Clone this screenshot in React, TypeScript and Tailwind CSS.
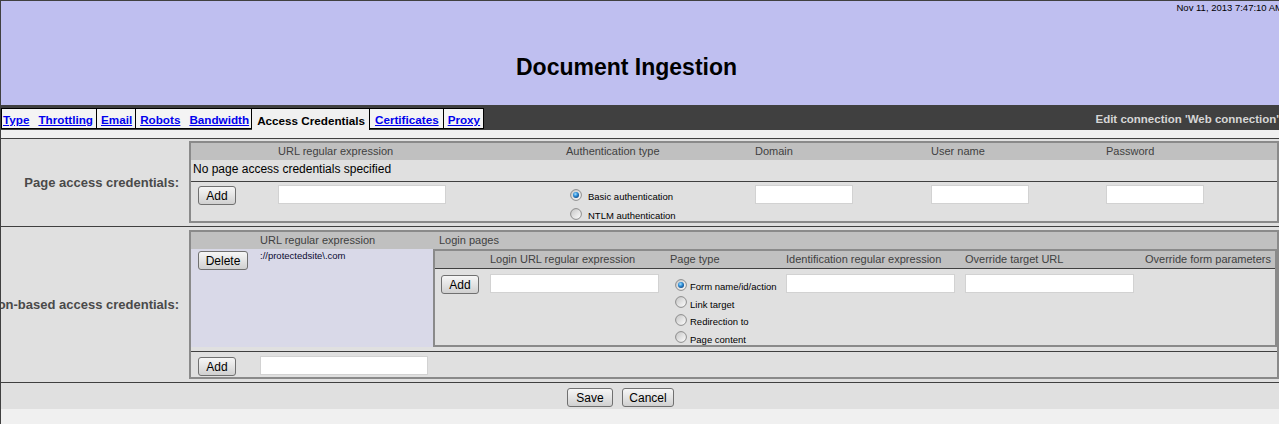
import React from "react";

function Radio({ checked }: { checked?: boolean }) {
  return (
    <svg width="12" height="12" viewBox="0 0 12 12" className="shrink-0">
      <defs>
        <linearGradient id="rgOuter" x1="0" y1="0" x2="1" y2="1">
          <stop offset="0" stopColor="#c4c4c4" />
          <stop offset="1" stopColor="#ffffff" />
        </linearGradient>
        <radialGradient id="rgDot" cx="0.4" cy="0.35" r="0.75">
          <stop offset="0" stopColor="#a8e0ff" />
          <stop offset="0.45" stopColor="#2f8fd8" />
          <stop offset="1" stopColor="#0b3d78" />
        </radialGradient>
      </defs>
      <circle cx="6" cy="6" r="5.4" fill="url(#rgOuter)" stroke="#8c8c8c" strokeWidth="1" />
      {checked && <circle cx="6" cy="6" r="3" fill="url(#rgDot)" />}
    </svg>
  );
}

function Btn({ children, className = "" }: { children: React.ReactNode; className?: string }) {
  return (
    <button
      className={`h-[19px] rounded-[3px] border border-[#707070] bg-linear-to-b from-[#f6f6f6] via-[#e4e4e4] to-[#d0d0d0] flex items-center justify-center text-[12px] leading-none text-black ${className}`}
    >
      {children}
    </button>
  );
}

function Field({ className = "" }: { className?: string }) {
  return <div className={`h-[19px] border border-[#d2d2d2] bg-white ${className}`} />;
}

function RadioRow({
  checked,
  label,
  gap,
  h,
}: {
  checked?: boolean;
  label: string;
  gap: string;
  h: string;
}) {
  return (
    <div className={`flex items-center ${gap} ${h}`}>
      <Radio checked={checked} />
      <span className="pt-[5px] text-[9.5px] leading-[12px] text-black whitespace-nowrap">{label}</span>
    </div>
  );
}

export default function App() {
  return (
    <div className="w-[1279px] h-[424px] overflow-hidden bg-[#f0f0f0] border-l border-[#404040] font-['Liberation_Sans',Arial,sans-serif]">
      {/* Header */}
      <div className="border-t border-[#404040]">
        <div className="h-[104px] bg-[#bfbff0] flex flex-col">
          <div className="flex justify-end -mr-[4px] pt-[1px] text-[9.5px] leading-[12px] text-black whitespace-nowrap">
            Nov 11, 2013 7:47:10 AM
          </div>
          <div className="w-[1251px] mt-[39px] text-center text-[23px] font-bold leading-[28px] text-black">
            Document Ingestion
          </div>
        </div>

        {/* Tab bar */}
        <div className="h-[25px] bg-[#404040] flex items-start justify-between text-[11.7px] font-bold">
          <div className="flex mt-[3px]">
            <div className="h-[21px] border border-black bg-[#f4f4f4] flex items-center pt-[2px] pl-[1px] pr-[3px] gap-[9px] leading-[19px]">
              <span className="text-[#0000ee] underline">Type</span>
              <span className="text-[#0000ee] underline">Throttling</span>
            </div>
            <div className="h-[21px] border-y border-r border-black bg-[#f4f4f4] flex items-center pt-[2px] pl-[4px] pr-[3px] leading-[19px]">
              <span className="text-[#0000ee] underline">Email</span>
            </div>
            <div className="h-[21px] border-y border-r border-black bg-[#f4f4f4] flex items-center pt-[2px] pl-[4px] pr-[2px] gap-[9px] leading-[19px]">
              <span className="text-[#0000ee] underline">Robots</span>
              <span className="text-[#0000ee] underline">Bandwidth</span>
            </div>
            <div className="h-[22px] border-t border-r border-black bg-[#f0f0f0] flex items-center pt-[2px] pl-[5px] pr-[4px] leading-[19px]">
              <span className="text-black">Access Credentials</span>
            </div>
            <div className="h-[21px] border-y border-r border-black bg-[#f4f4f4] flex items-center pt-[2px] pl-[5px] pr-[4px] leading-[19px]">
              <span className="text-[#0000ee] underline">Certificates</span>
            </div>
            <div className="h-[21px] border-y border-r border-black bg-[#f4f4f4] flex items-center pt-[2px] pl-[4px] pr-[3px] leading-[19px]">
              <span className="text-[#0000ee] underline">Proxy</span>
            </div>
          </div>
          <div className="pt-[2px] leading-[25px] text-[11.5px] text-[#d6d6d6] whitespace-nowrap">
            Edit connection 'Web connection'
          </div>
        </div>
      </div>

      {/* strip */}
      <div className="h-[8px] bg-[#f0f0f0]" />

      {/* Main */}
      <div className="border-t border-[#404040] bg-[#e0e0e0]">
        {/* Row 1: Page access credentials */}
        <div className="h-[87px] flex border-b border-[#404040] box-content">
          <div className="w-[188px] shrink-0 flex items-center justify-end pr-[10px] overflow-hidden">
            <span className="text-[13px] font-bold text-[#4a4a4a] whitespace-nowrap">Page access credentials:</span>
          </div>
          <div className="flex-1 mt-[2px] h-[82px] border-2 border-[#8a8a8a] flex flex-col">
            <div className="h-[17px] bg-[#c0c0c0] grid grid-cols-[87px_288px_189px_176px_175px_1fr] text-[11px] leading-[17px] text-[#404040]">
              <div />
              <div>URL regular expression</div>
              <div>Authentication type</div>
              <div>Domain</div>
              <div>User name</div>
              <div>Password</div>
            </div>
            <div className="h-[21px] pl-[2px] text-[12px] leading-[19px] text-black">
              No page access credentials specified
            </div>
            <div className="h-[39px] border-t border-[#404040] grid grid-cols-[87px_288px_189px_176px_175px_1fr]">
              <div className="pl-[7px] pt-[4px]">
                <Btn className="w-[38px]">Add</Btn>
              </div>
              <div className="pt-[3px]">
                <Field className="w-[168px]" />
              </div>
              <div className="pl-[4px] pt-[3px]">
                <RadioRow checked label="Basic authentication" gap="gap-[6px]" h="h-[19px]" />
                <RadioRow label="NTLM authentication" gap="gap-[6px]" h="h-[19px]" />
              </div>
              <div className="pt-[3px]">
                <Field className="w-[98px]" />
              </div>
              <div className="pt-[3px]">
                <Field className="w-[98px]" />
              </div>
              <div className="pt-[3px]">
                <Field className="w-[98px]" />
              </div>
            </div>
          </div>
        </div>

        {/* Row 2: Session-based access credentials */}
        <div className="h-[155px] flex border-b border-[#404040] box-content">
          <div className="w-[188px] shrink-0 flex items-center justify-end pr-[10px] overflow-hidden">
            <span className="text-[13px] font-bold text-[#4a4a4a] whitespace-nowrap">Session-based access credentials:</span>
          </div>
          <div className="flex-1 mt-[3px] h-[149px] border-2 border-[#8a8a8a] flex flex-col">
            <div className="h-[17px] shrink-0 bg-[#c0c0c0] grid grid-cols-[69px_173px_1fr] text-[11px] leading-[17px] text-[#404040]">
              <div />
              <div>URL regular expression</div>
              <div className="pl-[6px]">Login pages</div>
            </div>
            <div className="h-[98px] shrink-0 flex">
              <div className="w-[242px] shrink-0 bg-[#d9d9e8] grid grid-cols-[69px_1fr] content-start">
                <div className="pl-[7px] pt-[2px]">
                  <Btn className="w-[50px]">Delete</Btn>
                </div>
                <div className="pt-[1px] text-[9.5px] leading-[12px] text-[#0a0a30]">://protectedsite\.com</div>
              </div>
              <div className="flex-1 border-2 border-[#8a8a8a] flex flex-col">
                <div className="h-[17px] shrink-0 bg-[#c0c0c0] grid grid-cols-[55px_180px_116px_179px_180px_1fr] text-[11px] leading-[17px] text-[#404040] whitespace-nowrap">
                  <div />
                  <div>Login URL regular expression</div>
                  <div>Page type</div>
                  <div>Identification regular expression</div>
                  <div>Override target URL</div>
                  <div>Override form parameters</div>
                </div>
                <div className="flex-1 border-t border-[#404040] grid grid-cols-[55px_180px_116px_179px_180px_1fr]">
                  <div className="pl-[6px] pt-[6px]">
                    <Btn className="w-[38px]">Add</Btn>
                  </div>
                  <div className="pt-[5px]">
                    <Field className="w-[169px]" />
                  </div>
                  <div className="pl-[5px] pt-[7px]">
                    <RadioRow checked label="Form name/id/action" gap="gap-[3px]" h="h-[17.5px]" />
                    <RadioRow label="Link target" gap="gap-[3px]" h="h-[17.5px]" />
                    <RadioRow label="Redirection to" gap="gap-[3px]" h="h-[17.5px]" />
                    <RadioRow label="Page content" gap="gap-[3px]" h="h-[17.5px]" />
                  </div>
                  <div className="pt-[5px]">
                    <Field className="w-[169px]" />
                  </div>
                  <div className="pt-[5px]">
                    <Field className="w-[169px]" />
                  </div>
                  <div />
                </div>
              </div>
            </div>
            <div className="h-[4px] shrink-0" />
            <div className="flex-1 border-t border-[#404040] grid grid-cols-[69px_1fr]">
              <div className="pl-[7px] pt-[5px]">
                <Btn className="w-[38px]">Add</Btn>
              </div>
              <div className="pt-[4px]">
                <Field className="w-[168px]" />
              </div>
            </div>
          </div>
        </div>

        {/* Buttons */}
        <div className="h-[26px] flex items-start pt-[5px] pl-[566px] gap-[9px]">
          <Btn className="w-[46px]">Save</Btn>
          <Btn className="w-[52px]">Cancel</Btn>
        </div>
      </div>
    </div>
  );
}
